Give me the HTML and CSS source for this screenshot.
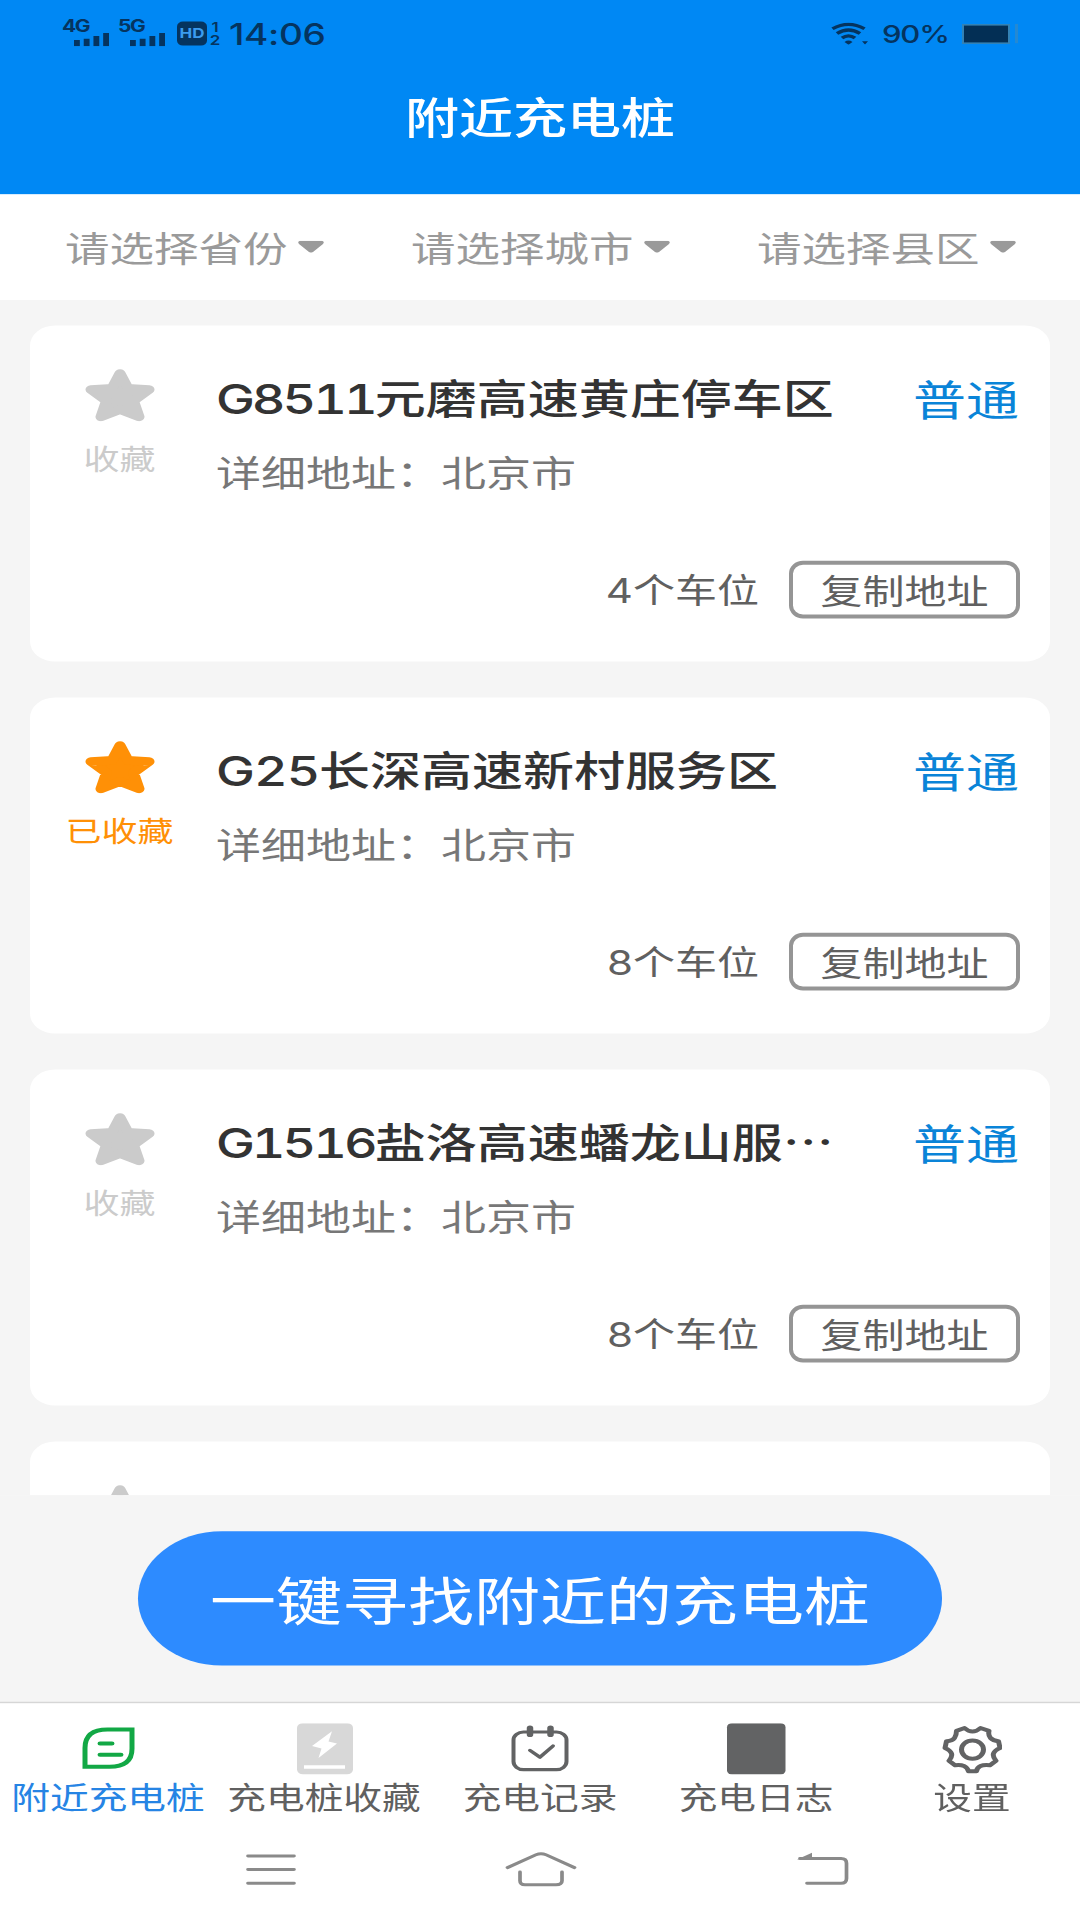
FILE: index.html
```html
<!DOCTYPE html>
<html lang="zh-CN">
<head>
<meta charset="utf-8">
<title>附近充电桩</title>
<link rel="stylesheet" href="styles.css">
</head>
<body>
<svg width="0" height="0" class="defs" aria-hidden="true">
  <symbol id="star" viewBox="0 0 70 66">
    <path d="M35 6 L43 24.500 L64 26 L48.500 40 L54 60 L35 51 L16 60 L21.500 40 L6 26 L27 24.500Z" fill="currentColor" stroke="currentColor" stroke-width="11" stroke-linejoin="round"/>
  </symbol>
  <symbol id="bars" viewBox="0 0 36 17">
    <path d="M0 9h6v8H0zM10 7.500h6V17h-6zM20 4h6v13h-6zM30 0h6v17h-6z" fill="currentColor"/>
  </symbol>
</svg>
<div class="screen">
  <header class="header">
    <div class="status">
      <div class="signal"><span class="net">4G</span><svg class="bars"><use href="#bars"/></svg></div>
      <div class="signal signal-second"><span class="net">5G</span><svg class="bars"><use href="#bars"/></svg></div>
      <span class="hd">HD</span>
      <span class="sims"><span>1</span><span>2</span></span>
      <span class="time">14:06</span>
      <svg class="wifi" width="38" height="28" viewBox="0 0 38 28" fill="none" stroke="currentColor" stroke-width="4">
        <path d="M1.500 8Q17.500-3 33.500 8M6 14Q17.500 5 29 14M11 19.500Q17.500 14 24 19.500"/>
        <path d="M13.500 24.500Q17.500 21 21.500 24.500L17.500 28ZM31 23.500h6l-3 4z" fill="currentColor" stroke="none"/>
      </svg>
      <span class="percent">90%</span>
      <span class="battery"></span><span class="battery-cap"></span>
    </div>
    <h1 class="title">附近充电桩</h1>
  </header>
  <nav class="filters">
    <div class="filter">请选择省份<svg class="caret" viewBox="0 0 26 15"><path d="M2 0H24Q27 1 25 4L15 14Q13 16 11 14L1 4Q-1 1 2 0Z"/></svg></div>
    <div class="filter">请选择城市<svg class="caret" viewBox="0 0 26 15"><path d="M2 0H24Q27 1 25 4L15 14Q13 16 11 14L1 4Q-1 1 2 0Z"/></svg></div>
    <div class="filter">请选择县区<svg class="caret" viewBox="0 0 26 15"><path d="M2 0H24Q27 1 25 4L15 14Q13 16 11 14L1 4Q-1 1 2 0Z"/></svg></div>
  </nav>
  <main class="list">
    <article class="card">
      <div class="fav"><svg class="star"><use href="#star"/></svg><span>收藏</span></div>
      <div class="info">
        <div class="head"><h2 class="name"><span class="latin latin-long">G8511</span>元磨高速黄庄停车区</h2><span class="type">普通</span></div>
        <p class="address">详细地址：北京市</p>
        <div class="foot"><span><span class="num">4</span>个车位</span><button class="copy">复制地址</button></div>
      </div>
    </article>
    <article class="card">
      <div class="fav fav-on"><svg class="star"><use href="#star"/></svg><span>已收藏</span></div>
      <div class="info">
        <div class="head"><h2 class="name"><span class="latin">G25</span>长深高速新村服务区</h2><span class="type">普通</span></div>
        <p class="address">详细地址：北京市</p>
        <div class="foot"><span><span class="num">8</span>个车位</span><button class="copy">复制地址</button></div>
      </div>
    </article>
    <article class="card">
      <div class="fav"><svg class="star"><use href="#star"/></svg><span>收藏</span></div>
      <div class="info">
        <div class="head"><h2 class="name"><span class="latin latin-long">G1516</span>盐洛高速蟠龙山服…</h2><span class="type">普通</span></div>
        <p class="address">详细地址：北京市</p>
        <div class="foot"><span><span class="num">8</span>个车位</span><button class="copy">复制地址</button></div>
      </div>
    </article>
    <article class="card">
      <div class="fav"><svg class="star"><use href="#star"/></svg></div>
    </article>
  </main>
  <div class="action"><button class="find">一键寻找附近的充电桩</button></div>
  <nav class="tabs">
    <div class="tab tab-on">
      <svg width="60" height="64" viewBox="0 0 60 64" fill="none" stroke="#12a845" stroke-width="5">
        <path d="M7 54.500V31Q7 8 29.500 8H54V32Q54 54.500 31.500 54.500Z"/>
        <path d="M22 25.500h12M22 39.500h21" stroke-linecap="round"/>
      </svg>
      <span>附近充电桩</span>
    </div>
    <div class="tab">
      <svg width="60" height="64" viewBox="0 0 60 64">
        <rect x="3" width="56" height="64" rx="6" fill="#d8d8d8"/>
        <path d="M38 10 18 28.500 27.500 31.500 24.500 43.500 43 25.500 34.500 23Z" fill="#fff"/>
        <path d="M10 52.500h41v4.500H10z" fill="#fff"/>
      </svg>
      <span>充电桩收藏</span>
    </div>
    <div class="tab">
      <svg width="60" height="64" viewBox="0 0 60 64" fill="none" stroke="#626364" stroke-width="4" stroke-linecap="round">
        <rect x="3.500" y="11" width="53" height="47" rx="10"/>
        <path d="M20 6v8M40.500 6v8" stroke-width="6.500"/>
        <path d="M20 34l10 8.500L43 28.500" stroke-linejoin="round"/>
      </svg>
      <span>充电记录</span>
    </div>
    <div class="tab">
      <svg width="60" height="64" viewBox="0 0 60 64"><rect x="1" width="58.500" height="64" rx="5" fill="#626364"/></svg>
      <span>充电日志</span>
    </div>
    <div class="tab">
      <svg width="60" height="64" viewBox="0 0 60 64" fill="none" stroke="#626364" stroke-width="5" stroke-linejoin="round">
        <path d="M22.500 6Q26.500 10.500 30.500 10.500T38.500 6L47 9.500Q46 15 48.500 18.500T56.500 22.500L58 31Q52.500 34 51.500 38T54 47L48 52.500Q42 51.500 38.500 53.500T34.500 60H26.500Q25.500 55.500 22 53.500T13 52.500L7 47Q10.500 42 9.500 38T3 31L4.500 22.500Q10.500 22 12.500 18.500T14.500 9.500Z"/>
        <ellipse cx="30.500" cy="33" rx="11" ry="11.500"/>
      </svg>
      <span>设置</span>
    </div>
  </nav>
  <footer class="system">
    <svg width="72" height="44" viewBox="0 0 72 44" fill="none" stroke="#8a8a8a" stroke-width="3.700" stroke-linecap="round"><path d="M13 5h46M13 22h46M13 39h46"/></svg>
    <svg width="72" height="44" viewBox="0 0 72 44" fill="none" stroke="#8a8a8a" stroke-width="3.700" stroke-linecap="round"><path d="M2.500 19.500 31 3.500Q36 .8 41 3.500L69.500 19.500M15 25V36Q15 41 20 41H51Q57 41 57 36V25"/></svg>
    <svg width="72" height="44" viewBox="0 0 72 44" fill="none" stroke="#8a8a8a" stroke-width="3.700" stroke-linecap="round"><path d="M14 8H55Q60.500 8 60.500 14V33Q60.500 39 55 39H21"/><path d="M11 9.500 26 1V9.500Z" fill="#8a8a8a" stroke="none"/></svg>
  </footer>
</div>
</body>
</html>
```
FILE: styles.css
```css
* { box-sizing: border-box; margin: 0; padding: 0; }

html { height: 1920px; overflow: hidden; }

body {
  width: 1080px;
  height: 1920px;
  overflow: hidden;
  background: #fff;
  font-family: "Noto Sans CJK SC", sans-serif;
}

.defs { display: none; }

/* A tall 1080x2400 phone layout, compressed to the height of the window. */
.screen {
  display: flex;
  flex-direction: column;
  width: 1080px;
  height: 2400px;
  margin-bottom: -480px;
  transform: scaleY(.8);
  transform-origin: 0 0;
}

.header { height: 243px; background: #0088f4; color: #fff; }

.status {
  display: flex;
  align-items: center;
  height: 84px;
  padding: 0 62px 0 62px;
  color: #05345f;
  font-family: Inter, sans-serif;
}

.signal { display: flex; flex-direction: column; width: 47px; height: 36px; }
.signal-second { margin-left: 9px; }
.net { font-size: 21px; font-weight: 700; line-height: 17px; letter-spacing: -1.500px; }
.bars { width: 35px; height: 17px; margin-left: 12px; }

.hd {
  width: 30px;
  height: 30px;
  margin-left: 12px;
  border-radius: 6px;
  background: #05345f;
  color: #3b9bee;
  font-size: 17px;
  font-weight: 700;
  line-height: 30px;
  text-align: center;
}

.sims {
  display: flex;
  flex-direction: column;
  align-items: center;
  width: 12px;
  margin-left: 2px;
  font-size: 17px;
  font-weight: 600;
  line-height: 16px;
}

.time { margin: 2px 0 0 8px; font-size: 37px; font-weight: 500; line-height: 42px; letter-spacing: -.300px; }
.wifi { margin-left: auto; }
.percent { width: 66px; margin: 2px 0 0 13px; font-size: 31px; font-weight: 500; line-height: 40px; letter-spacing: -1.200px; white-space: nowrap; }
.battery { width: 48px; height: 25px; margin-left: 14px; border: 2px solid #3382b5; background: #032f55; }
.battery-cap { width: 3px; height: 24px; margin-left: 5px; background: #2589d2; }

.title { font-size: 54px; font-weight: 500; line-height: 80px; height: 80px; margin-top: 20px; text-align: center; }

.filters { display: flex; height: 132px; padding-left: 65px; background: #fff; }
.filter {
  display: flex;
  align-items: center;
  gap: 10px;
  width: 346px;
  height: 131px;
  color: #9a9a9a;
  font-size: 44.500px;
  line-height: 64px;
  white-space: nowrap;
}
.filter:last-child { width: 300px; }
.caret { width: 26px; height: 15px; fill: #9a9a9a; }

.list {
  display: flex;
  flex-direction: column;
  gap: 45px;
  height: 1494px;
  padding: 32px 30px 0;
  overflow: hidden;
  background: #f5f5f5;
}

.card { display: flex; flex: none; height: 420px; border-radius: 25px; background: #fff; }

.fav {
  display: flex;
  flex-direction: column;
  align-items: center;
  width: 179px;
  padding-top: 54px;
  color: #cbcbcb;
  font-size: 36px;
  line-height: 50px;
}
.fav span { margin-top: 20px; }
.fav-on { color: #ff9006; }
.star { width: 70px; height: 66px; }

.info { flex: 1; padding: 54px 30px 0 7px; }

.head { display: flex; justify-content: space-between; height: 72px; line-height: 72px; }
.name { margin-top: -2px; color: #333; font-size: 51px; font-weight: 500; white-space: nowrap; }
.latin { font-family: Inter, sans-serif; font-size: 52px; }
.latin-long { font-variant-numeric: tabular-nums; letter-spacing: -3px; }
.type { margin-right: 1px; color: #0a84d8; font-size: 53px; }

.address { margin-top: 25px; color: #777; font-size: 45px; line-height: 64px; }

.foot {
  display: flex;
  align-items: center;
  justify-content: flex-end;
  gap: 30px;
  height: 72px;
  margin-top: 79px;
  color: #606060;
  font-size: 42px;
  line-height: 60px;
}
.num { font-family: Inter, sans-serif; }

.copy {
  width: 231px;
  height: 72px;
  border: solid #959595;
  border-width: 5px 4px;
  border-radius: 14px / 16px;
  background: #fff;
  color: #606060;
  font: 42px/60px "Noto Sans CJK SC", sans-serif;
}

.action { display: flex; justify-content: center; height: 258px; padding-top: 45px; background: #f5f5f5; }
.find {
  width: 804px;
  height: 168px;
  padding-bottom: 2px;
  border: 0;
  border-radius: 84px;
  background: #2d8bff;
  color: #fff;
  font: 66px/96px "Noto Sans CJK SC", sans-serif;
}

.tabs { display: flex; height: 159px; border-top: 2px solid #d6d6d6; background: #fff; }
.tab {
  display: flex;
  flex-direction: column;
  align-items: center;
  width: 216px;
  padding-top: 25px;
  color: #606060;
  font-size: 38.700px;
  line-height: 53px;
  white-space: nowrap;
}
.tab-on { color: #2684e4; }

.system { display: flex; gap: 189px; padding: 29px 0 0 235px; }
.system svg:last-child { margin-left: 20px; }
.system svg:nth-child(2) { margin-left: 9px; }
```
